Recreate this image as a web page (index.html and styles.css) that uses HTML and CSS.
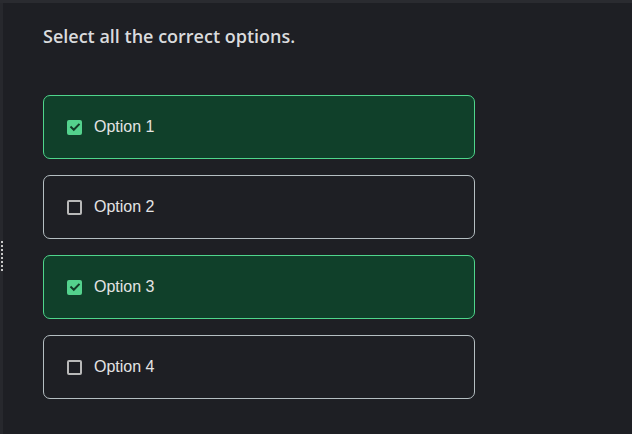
FILE: index.html
```html
<!DOCTYPE html>
<html>
<head>
<meta charset="utf-8">
<link rel="stylesheet" href="styles.css">
</head>
<body>
<div class="topbar"></div>
<div class="frame">
  <div class="sidebar"><div class="handle"></div></div>
  <main class="content">
    <h1 class="title">Select all the correct options.</h1>
    <div class="options">
      <label class="option checked">
        <span class="box"><svg viewBox="0 0 14 14" width="14" height="14"><path d="M3.2 7.2 L5.8 9.8 L10.8 4.6" fill="none" stroke="#123d28" stroke-width="2" stroke-linecap="square"/></svg></span>
        <span class="text">Option 1</span>
      </label>
      <label class="option">
        <span class="box"></span>
        <span class="text">Option 2</span>
      </label>
      <label class="option checked">
        <span class="box"><svg viewBox="0 0 14 14" width="14" height="14"><path d="M3.2 7.2 L5.8 9.8 L10.8 4.6" fill="none" stroke="#123d28" stroke-width="2" stroke-linecap="square"/></svg></span>
        <span class="text">Option 3</span>
      </label>
      <label class="option">
        <span class="box"></span>
        <span class="text">Option 4</span>
      </label>
    </div>
  </main>
</div>
</body>
</html>
```
FILE: styles.css
```css
html, body {
  margin: 0;
  padding: 0;
  background: #1e1f24;
  height: 100%;
}
body {
  display: flex;
  flex-direction: column;
  overflow: hidden;
}
.topbar {
  height: 3px;
  background: #2a2b30;
  flex: none;
}
.frame {
  display: flex;
  flex: 1;
}
.sidebar {
  width: 3px;
  background: #27282d;
  flex: none;
  display: flex;
  align-items: flex-start;
}
.handle {
  margin-top: 238px;
  margin-left: 1px;
  width: 2px;
  height: 30px;
  background: repeating-linear-gradient(to bottom, #c9c9c9 0 2px, transparent 2px 4px);
}
.content {
  padding: 21px 0 0 40px;
}
.title {
  margin: 0 0 47px 0;
  font-family: "Open Sans", "Noto Sans", sans-serif;
  font-weight: 600;
  font-size: 18px;
  line-height: 24px;
  color: #dadbdd;
}
.options {
  display: flex;
  flex-direction: column;
  gap: 16px;
  width: 432px;
}
.option {
  box-sizing: border-box;
  height: 64px;
  border: 1px solid #b4bec2;
  border-radius: 7px;
  display: flex;
  align-items: center;
  padding-left: 23px;
  gap: 12px;
}
.option.checked {
  background: #10402a;
  border-color: #4fd68c;
}
.box {
  box-sizing: border-box;
  width: 15px;
  height: 15px;
  border: 2px solid #b9b9b9;
  border-radius: 2px;
  display: flex;
  align-items: center;
  justify-content: center;
}
.option.checked .box {
  border: none;
  background: #54d28d;
}
.box svg {
  display: block;
}
.text {
  font-family: "Liberation Sans", Arial, sans-serif;
  font-size: 16px;
  color: #e4e4e4;
}
```
